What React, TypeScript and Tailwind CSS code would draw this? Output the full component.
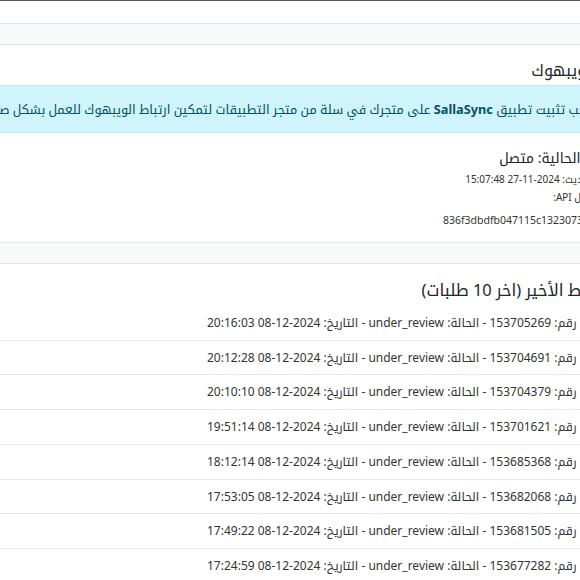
import React from "react";

const orders = [
  { id: "153705269", at: "2024-12-08 20:16:03" },
  { id: "153704691", at: "2024-12-08 20:12:28" },
  { id: "153704379", at: "2024-12-08 20:10:10" },
  { id: "153701621", at: "2024-12-08 19:51:14" },
  { id: "153685368", at: "2024-12-08 18:12:14" },
  { id: "153682068", at: "2024-12-08 17:53:05" },
  { id: "153681505", at: "2024-12-08 17:49:22" },
  { id: "153677282", at: "2024-12-08 17:24:59" },
  { id: "153671940", at: "2024-12-08 17:02:41" },
  { id: "153668113", at: "2024-12-08 16:47:36" },
];

export default function App() {
  return (
    <div className="w-[580px] h-[580px] overflow-hidden bg-[#f8f9fa] text-[#212529] font-['Noto_Sans','Noto_Kufi_Arabic',sans-serif]">
      <div dir="rtl" className="w-[1100px] ml-[-459px]">
        {/* tail of the previous card */}
        <div className="h-[24px] bg-white border-t border-t-[#555] border-b border-b-[#e3e3e3]" />

        {/* webhook status card */}
        <div className="mt-[20px] bg-white border-y border-[#e3e3e3] px-3 pt-4 pb-[13px]">
          <h5 className="text-[16px] leading-[19px] font-normal">حالة الويبهوك</h5>
          <div className="mt-[5px] border border-[#b6effb] bg-[#cff4fc] text-[#055160] pr-[8px] pl-4 py-[14px] text-[12.75px] leading-[18px]">
            هام: يجب تثبيت تطبيق <strong className="font-bold">SallaSync</strong> على متجرك في سلة من متجر
            التطبيقات لتمكين ارتباط الويبهوك للعمل بشكل صحيح.
          </div>
          <p className="mt-[15px] pr-[11px] text-[14px] leading-[20px]">الحالة الحالية: متصل</p>
          <p className="mt-[2px] pr-[22px] text-[10px] leading-[18px] text-[#333]">آخر تحديث: 2024-11-27 15:07:48</p>
          <p className="pr-[17px] text-[10px] leading-[18px] text-[#333]">مفتاح ال API:</p>
          <p className="mt-[5px] text-[10.5px] leading-[18px] text-[#333]">836f3dbdfb047115c1323073a9e4b2f1</p>
        </div>

        {/* recent activity card */}
        <div className="mt-[20px] bg-white border-t border-[#e3e3e3] pt-4">
          <h5 className="pr-[24px] pl-4 text-[16.5px] leading-[19px] font-normal">النشاط الأخير (اخر 10 طلبات)</h5>
          <ul className="mt-[7px]">
            {orders.map((o) => (
              <li
                key={o.id}
                className="pr-[38px] pl-4 py-2 text-[12px] leading-[17.7px] text-[#333] border-b border-[#e5e7eb]"
              >
                طلب رقم: {o.id} - الحالة: under_review - التاريخ: {o.at}
              </li>
            ))}
          </ul>
        </div>
      </div>
    </div>
  );
}
